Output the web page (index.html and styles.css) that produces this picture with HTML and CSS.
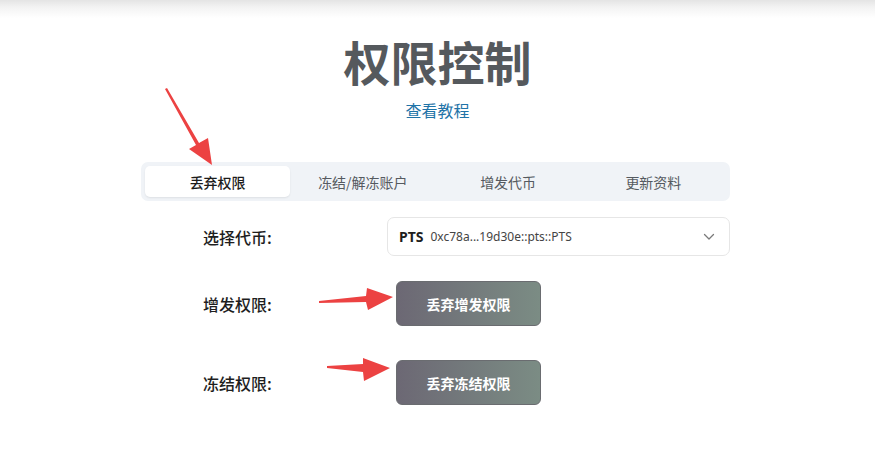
FILE: index.html
```html
<!DOCTYPE html>
<html lang="zh-CN">
<head>
<meta charset="utf-8">
<title>权限控制</title>
<link rel="stylesheet" href="styles.css">
</head>
<body>
<div class="topshade"></div>
<h1 class="title">权限控制</h1>
<div class="tutorial"><a href="#" class="link">查看教程</a></div>
<div class="panel">
  <div class="tabs">
    <div class="tab active">丢弃权限</div>
    <div class="tab">冻结/解冻账户</div>
    <div class="tab">增发代币</div>
    <div class="tab">更新资料</div>
  </div>
  <div class="form">
    <div class="row row-select">
      <div class="label">选择代币:</div>
      <div class="select">
        <span class="sym">PTS</span>
        <span class="addr">0xc78a...19d30e::pts::PTS</span>
        <svg class="chev" width="12" height="8" viewBox="0 0 12 8"><path d="M1.5 1.5 L6 6 L10.5 1.5" fill="none" stroke="#7a7a7a" stroke-width="1.3" stroke-linecap="round" stroke-linejoin="round"/></svg>
      </div>
    </div>
    <div class="row row-b1">
      <div class="label">增发权限:</div>
      <button class="btn">丢弃增发权限</button>
    </div>
    <div class="row row-b2">
      <div class="label">冻结权限:</div>
      <button class="btn">丢弃冻结权限</button>
    </div>
  </div>
</div>
<svg class="arrows" width="875" height="461" viewBox="0 0 875 461">
  <polygon fill="#ec4242" points="165,89 167,88 199,143 208,138 212,165 189,149 196,145"/>
  <polygon fill="#ec4242" points="319,301 319,303 366,302 368,310 393,297 367,288 366,296"/>
  <polygon fill="#ec4242" points="327,366 327,368 363,372 364,381 390,368 363,358 363,364"/>
</svg>
</body>
</html>
```

FILE: styles.css
```css
* { box-sizing: border-box; }
html, body { margin: 0; padding: 0; background: #fff; }
body {
  width: 875px;
  height: 461px;
  overflow: hidden;
  position: relative;
  font-family: "Noto Sans", "Noto Sans CJK SC", sans-serif;
  color: #222;
}
.topshade {
  height: 18px;
  background: linear-gradient(to bottom, #e4e4e4 0%, #f3f3f3 40%, #ffffff 100%);
}
.title {
  margin: 12px 0 0;
  text-align: center;
  font-family: "Noto Sans CJK SC", sans-serif;
  font-size: 47px;
  line-height: 62px;
  font-weight: 700;
  color: #55595d;
}
.tutorial {
  margin-top: 6px;
  text-align: center;
  line-height: 24px;
}
.link {
  font-family: "Noto Sans CJK SC", sans-serif;
  font-size: 16px;
  color: #1f74a8;
  text-decoration: none;
}
.panel {
  width: 589px;
  margin: 39px 0 0 141px;
}
.tabs {
  display: grid;
  grid-template-columns: repeat(4, 1fr);
  background: #f0f3f7;
  border-radius: 7px;
  padding: 4px;
  height: 39px;
}
.tab {
  display: flex;
  align-items: center;
  justify-content: center;
  font-family: "Noto Sans CJK SC", sans-serif;
  font-size: 14px;
  color: #555a60;
  border-radius: 5px;
}
.tab.active {
  background: #fff;
  color: #1c1c1c;
  font-weight: 500;
  box-shadow: 0 1px 2px rgba(0,0,0,0.08);
}
.form {
  padding-left: 62px;
}
.row {
  display: grid;
  grid-template-columns: 184px 1fr;
  align-items: center;
}
.row-select { margin-top: 16px; }
.row-b1 { margin-top: 25px; }
.row-b2 { margin-top: 34px; }
.label {
  font-family: "Noto Sans CJK SC", sans-serif;
  font-size: 16px;
  font-weight: 500;
  color: #1e1e1e;
}
.select {
  height: 39px;
  border: 1px solid #e6e6e6;
  border-radius: 7px;
  display: flex;
  align-items: center;
  padding: 0 14px 0 11px;
}
.sym {
  font-size: 14px;
  font-weight: 700;
  color: #1e1e1e;
}
.addr {
  margin-left: 7px;
  font-size: 12px;
  color: #444;
}
.chev { margin-left: auto; }
.btn {
  margin-left: 9px;
  width: 145px;
  height: 45px;
  border: 1px solid #6a6c70;
  border-radius: 6px;
  background: linear-gradient(to right, #6c6874, #7b8c84);
  color: #fff;
  font-family: "Noto Sans CJK SC", sans-serif;
  font-size: 14px;
  font-weight: 700;
  padding: 0;
}
.arrows {
  position: absolute;
  left: 0;
  top: 0;
  pointer-events: none;
}
```
